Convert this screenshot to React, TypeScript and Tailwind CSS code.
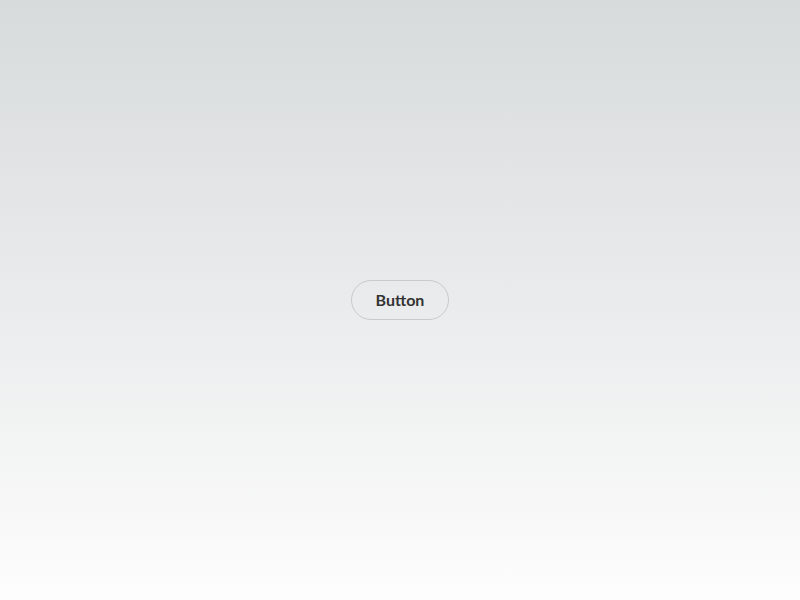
export default function App() {
    return (
        <div className="flex h-[600px] w-full items-center justify-center bg-[linear-gradient(to_bottom,#d7dbdb_0%,#eaebec_50%,#fdfdfd_100%)]">
            <button
                type="button"
                className="h-10 w-[98px] rounded-full border border-[#c9cacc] bg-transparent pb-px text-[16px] font-bold text-[#333] font-['Lato','Open_Sans',sans-serif]"
            >
                Button
            </button>
        </div>
    );
}
